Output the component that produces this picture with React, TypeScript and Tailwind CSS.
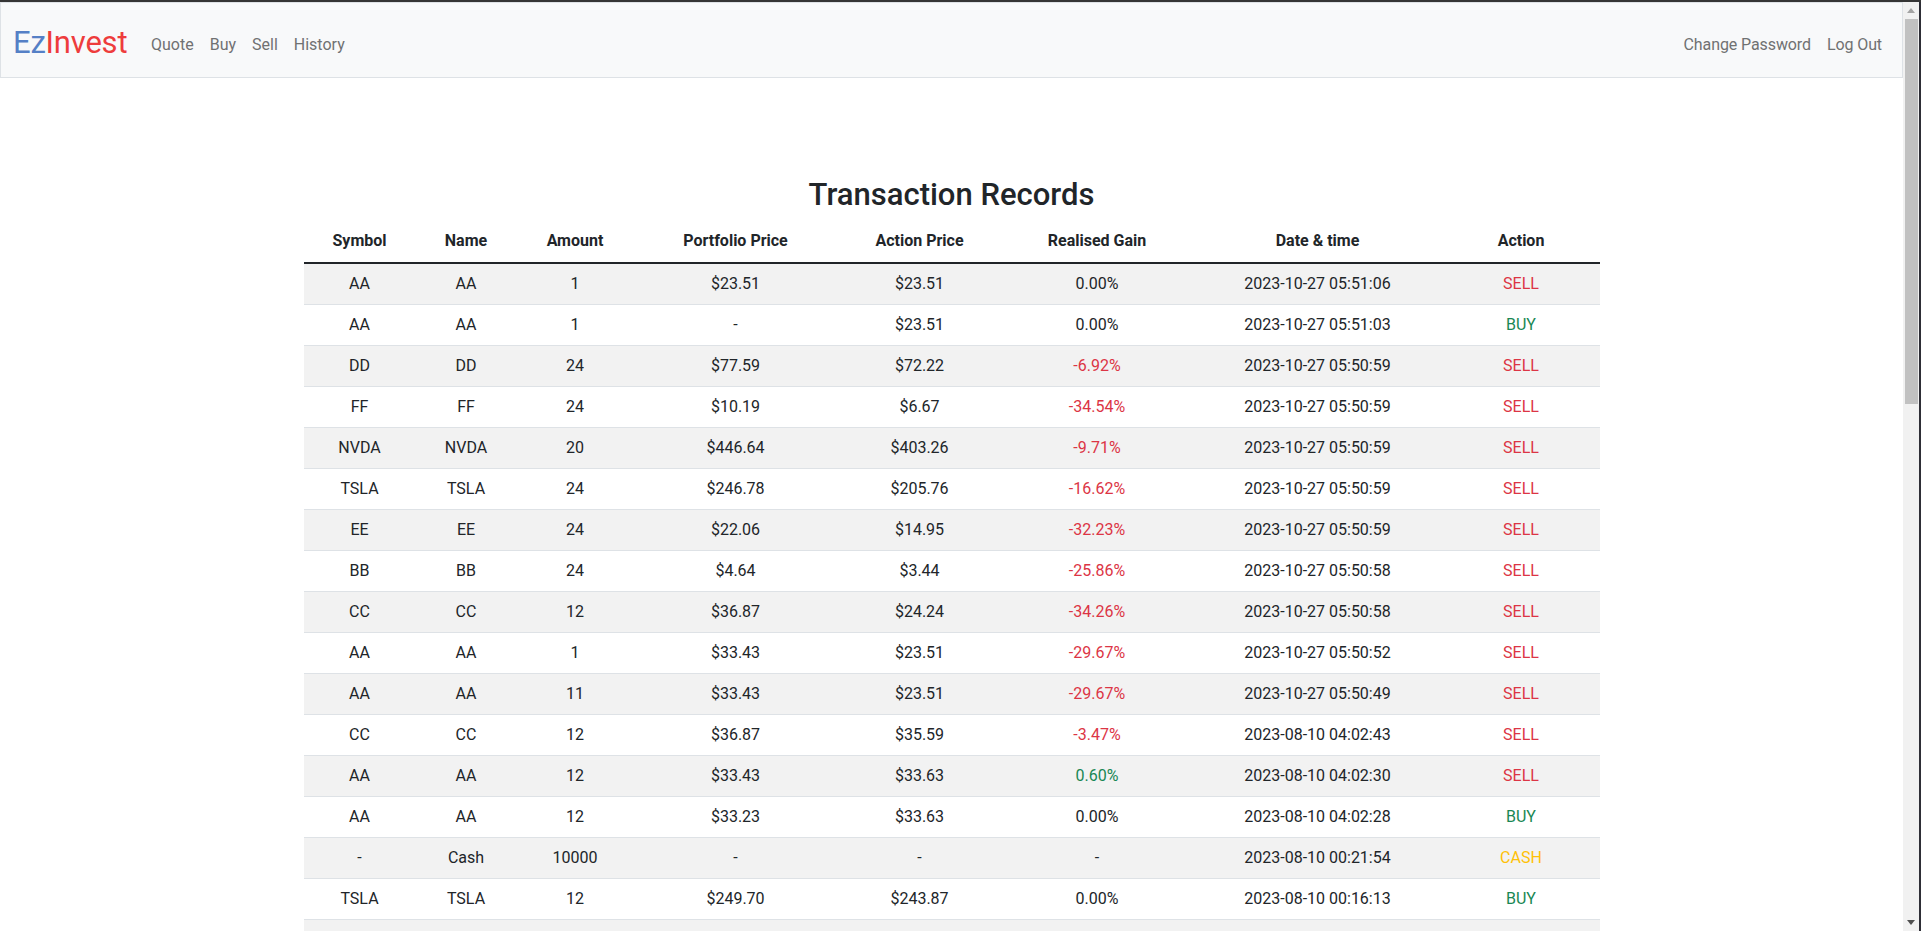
import React from "react";

type Row = {
  symbol: string;
  name: string;
  amount: string;
  portfolio: string;
  action: string;
  gain: string;
  gainTone: "neutral" | "neg" | "pos";
  date: string;
  type: "SELL" | "BUY" | "CASH" | "";
};

const rows: Row[] = [
  { symbol: "AA", name: "AA", amount: "1", portfolio: "$23.51", action: "$23.51", gain: "0.00%", gainTone: "neutral", date: "2023-10-27 05:51:06", type: "SELL" },
  { symbol: "AA", name: "AA", amount: "1", portfolio: "-", action: "$23.51", gain: "0.00%", gainTone: "neutral", date: "2023-10-27 05:51:03", type: "BUY" },
  { symbol: "DD", name: "DD", amount: "24", portfolio: "$77.59", action: "$72.22", gain: "-6.92%", gainTone: "neg", date: "2023-10-27 05:50:59", type: "SELL" },
  { symbol: "FF", name: "FF", amount: "24", portfolio: "$10.19", action: "$6.67", gain: "-34.54%", gainTone: "neg", date: "2023-10-27 05:50:59", type: "SELL" },
  { symbol: "NVDA", name: "NVDA", amount: "20", portfolio: "$446.64", action: "$403.26", gain: "-9.71%", gainTone: "neg", date: "2023-10-27 05:50:59", type: "SELL" },
  { symbol: "TSLA", name: "TSLA", amount: "24", portfolio: "$246.78", action: "$205.76", gain: "-16.62%", gainTone: "neg", date: "2023-10-27 05:50:59", type: "SELL" },
  { symbol: "EE", name: "EE", amount: "24", portfolio: "$22.06", action: "$14.95", gain: "-32.23%", gainTone: "neg", date: "2023-10-27 05:50:59", type: "SELL" },
  { symbol: "BB", name: "BB", amount: "24", portfolio: "$4.64", action: "$3.44", gain: "-25.86%", gainTone: "neg", date: "2023-10-27 05:50:58", type: "SELL" },
  { symbol: "CC", name: "CC", amount: "12", portfolio: "$36.87", action: "$24.24", gain: "-34.26%", gainTone: "neg", date: "2023-10-27 05:50:58", type: "SELL" },
  { symbol: "AA", name: "AA", amount: "1", portfolio: "$33.43", action: "$23.51", gain: "-29.67%", gainTone: "neg", date: "2023-10-27 05:50:52", type: "SELL" },
  { symbol: "AA", name: "AA", amount: "11", portfolio: "$33.43", action: "$23.51", gain: "-29.67%", gainTone: "neg", date: "2023-10-27 05:50:49", type: "SELL" },
  { symbol: "CC", name: "CC", amount: "12", portfolio: "$36.87", action: "$35.59", gain: "-3.47%", gainTone: "neg", date: "2023-08-10 04:02:43", type: "SELL" },
  { symbol: "AA", name: "AA", amount: "12", portfolio: "$33.43", action: "$33.63", gain: "0.60%", gainTone: "pos", date: "2023-08-10 04:02:30", type: "SELL" },
  { symbol: "AA", name: "AA", amount: "12", portfolio: "$33.23", action: "$33.63", gain: "0.00%", gainTone: "neutral", date: "2023-08-10 04:02:28", type: "BUY" },
  { symbol: "-", name: "Cash", amount: "10000", portfolio: "-", action: "-", gain: "-", gainTone: "neutral", date: "2023-08-10 00:21:54", type: "CASH" },
  { symbol: "TSLA", name: "TSLA", amount: "12", portfolio: "$249.70", action: "$243.87", gain: "0.00%", gainTone: "neutral", date: "2023-08-10 00:16:13", type: "BUY" },
  { symbol: "", name: "", amount: "", portfolio: "", action: "", gain: "", gainTone: "neutral", date: "", type: "" },
];

const gainClass = {
  neutral: "text-[#212529]",
  neg: "text-[#dc3545]",
  pos: "text-[#198754]",
};

const typeClass = {
  SELL: "text-[#dc3545]",
  BUY: "text-[#198754]",
  CASH: "text-[#ffc107]",
  "": "",
};

const headers = ["Symbol", "Name", "Amount", "Portfolio Price", "Action Price", "Realised Gain", "Date & time", "Action"];
const widths = ["w-[112px]", "w-[101px]", "w-[117px]", "w-[204px]", "w-[164px]", "w-[191px]", "w-[250px]", "w-[157px]"];

function Navbar() {
  return (
    <nav className="h-[76px] shrink-0 border border-[#dee2e6] bg-[#f8f9fa] px-3 flex items-start">
      <a className="w-[130px] mt-[16px] text-[31px] leading-[48px] tracking-[-0.2px] whitespace-nowrap">
        <span className="text-[#5580c6]">Ez</span>
        <span className="text-[#ee3c3c]">Invest</span>
      </a>
      <ul className="flex mt-[30px] text-[16px] leading-6 text-[#707172]">
        <li className="px-2">Quote</li>
        <li className="px-2">Buy</li>
        <li className="px-2">Sell</li>
        <li className="px-2">History</li>
      </ul>
      <ul className="ml-auto flex mt-[30px] text-[16px] leading-6 text-[#707172] tracking-[-0.1px]">
        <li className="px-2">Change Password</li>
        <li className="px-2">Log Out</li>
      </ul>
    </nav>
  );
}

function Arrow({ up }: { up: boolean }) {
  return (
    <div className="h-[17px] flex items-center justify-center">
      <svg width="8" height="5" viewBox="0 0 8 5">
        {up ? <polygon points="0,5 8,5 4,0" fill="#a3a3a3" /> : <polygon points="0,0 8,0 4,5" fill="#505050" />}
      </svg>
    </div>
  );
}

export default function App() {
  return (
    <div
      className="h-[931px] overflow-hidden flex flex-col bg-white text-[#212529]"
      style={{ fontFamily: "Roboto, 'Noto Sans', sans-serif" }}
    >
      <div className="h-[2px] bg-[#353535] shrink-0" />
      <div className="flex flex-1 min-h-0">
        <div className="flex-1 min-w-0 flex flex-col">
          <Navbar />
          <main className="mx-auto w-[1296px] pt-[98px] text-center">
            <h2 className="text-[31px] leading-[37px] font-medium mb-[8px]">Transaction Records</h2>
            <table className="w-[1296px] table-fixed border-separate border-spacing-0 text-[16px] leading-6">
              <colgroup>
                {widths.map((w, i) => (
                  <col key={i} className={w} />
                ))}
              </colgroup>
              <thead>
                <tr>
                  {headers.map((h) => (
                    <th key={h} className="pt-2 pb-[9px] font-bold border-b-2 border-[#212529]">
                      {h}
                    </th>
                  ))}
                </tr>
              </thead>
              <tbody>
                {rows.map((r, i) => {
                  const bg = i % 2 === 0 ? "bg-[#f2f2f2]" : "bg-white";
                  const td = `py-2 h-[41px] border-b border-[#dee2e6] ${bg}`;
                  return (
                    <tr key={i}>
                      <td className={td}>{r.symbol}</td>
                      <td className={td}>{r.name}</td>
                      <td className={td}>{r.amount}</td>
                      <td className={td}>{r.portfolio}</td>
                      <td className={td}>{r.action}</td>
                      <td className={`${td} ${gainClass[r.gainTone]}`}>{r.gain}</td>
                      <td className={td}>{r.date}</td>
                      <td className={`${td} ${typeClass[r.type]}`}>{r.type}</td>
                    </tr>
                  );
                })}
              </tbody>
            </table>
          </main>
        </div>
        <div className="w-[16px] shrink-0 bg-[#f1f1f1] flex flex-col">
          <Arrow up />
          <div className="ml-[2px] mr-[1px] h-[385px] bg-[#c1c1c1]" />
          <div className="flex-1" />
          <Arrow up={false} />
        </div>
        <div className="w-[2px] shrink-0 bg-[#2e2e36]" />
      </div>
    </div>
  );
}
